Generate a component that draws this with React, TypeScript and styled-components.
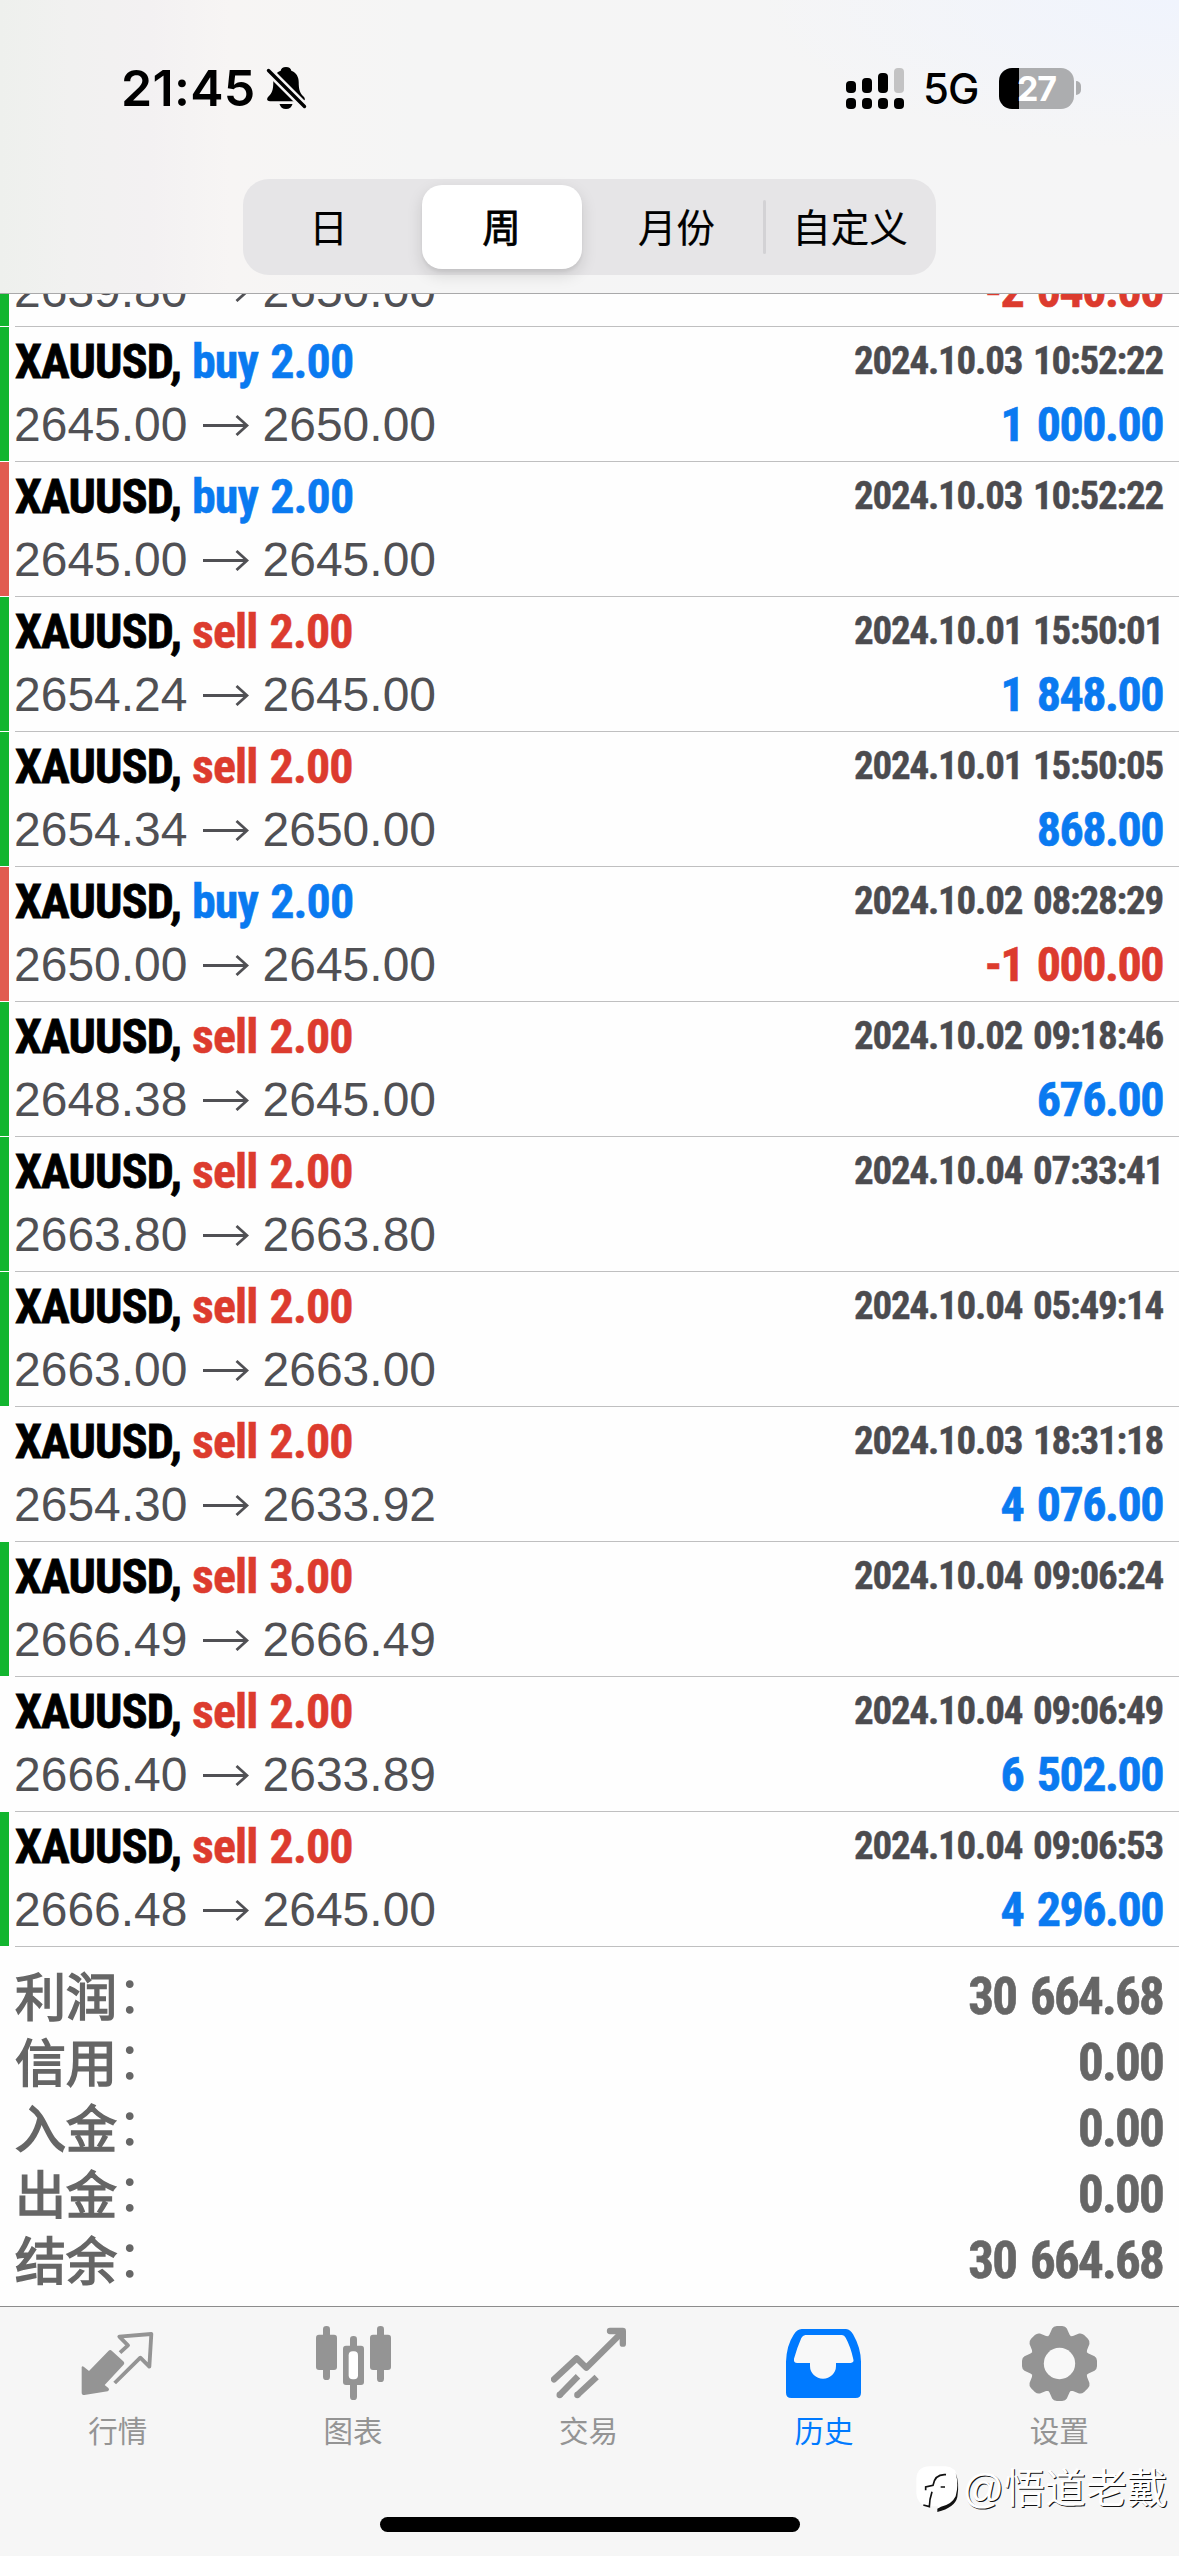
import React from 'react';
import styled, { createGlobalStyle } from 'styled-components';

const BLUE = '#0a7af0';
const RED = '#dc3b2e';
const GREEN = '#12b52f';
const CORAL = '#e15b50';
const GREY = '#949494';

const cjk = '"Liberation Sans", "Noto Sans CJK SC", sans-serif';
const condensed = '"Roboto Condensed", Roboto, "Liberation Sans", sans-serif';

const GlobalStyle = createGlobalStyle`
  * { box-sizing: border-box; }
  body { margin: 0; background: #fff; }
`;

const Screen = styled.div`
  position: relative;
  width: 1179px;
  height: 2556px;
  display: flex;
  flex-direction: column;
  background: #fefefe;
  overflow: hidden;
  font-family: ${cjk};
`;

/* ---------- header ---------- */

const Header = styled.header`
  height: 294px;
  flex: none;
  display: flex;
  flex-direction: column;
  align-items: center;
  border-bottom: 1px solid #a9a9aa;
  background:
    radial-gradient(ellipse 420px 150px at 100% 0, #f0f4fd, rgba(240, 244, 253, 0)),
    linear-gradient(90deg, #eef0ed 0, #f1f1f0 70px, #f3f1f2 150px, #f7f5f4 230px, #f5f5f5 420px, #f5f5f6 100%);
`;

const StatusBar = styled.div`
  width: 100%;
  height: 179px;
  padding: 54px 98px 0 121px;
  display: flex;
  justify-content: space-between;
  align-items: flex-start;
`;

const StatusGroup = styled.div`
  display: flex;
  align-items: center;
  height: 68px;
`;

const Clock = styled.span`
  font: 600 50px/68px Inter, sans-serif;
  letter-spacing: 0.3px;
  width: 145px;
  white-space: nowrap;
`;

const Network = styled.span`
  font: 500 42px/68px Inter, sans-serif;
  letter-spacing: -1px;
  width: 55px;
  margin: 2px 21px 0 19px;
  white-space: nowrap;
`;

const Battery = styled.div`
  width: 75px;
  height: 41px;
  border-radius: 13px;
  background: linear-gradient(90deg, #000 20px, #acadaf 20px);
  color: #fff;
  font: 700 34px/41px Inter, sans-serif;
  letter-spacing: -1px;
  text-align: center;
`;

const BatteryTip = styled.span`
  width: 5px;
  height: 14px;
  margin-left: 2px;
  border-radius: 0 5px 5px 0;
  background: #acadaf;
`;

const Segments = styled.div`
  width: 693px;
  height: 96px;
  margin-right: 1px;
  border-radius: 26px;
  background: #e6e5e7;
  display: grid;
  grid-template-columns: 172px 174px 176px 171px;
  padding: 6px 0;
`;

const Segment = styled.div<{ $active?: boolean; $divided?: boolean }>`
  position: relative;
  margin: 0 7px;
  padding-top: 3px;
  border-radius: 20px;
  text-align: center;
  font-size: 38.5px;
  font-weight: 400;
  -webkit-text-stroke: ${p => (p.$active ? '0.8px #000' : '0.2px #000')};
  line-height: 81px;
  white-space: nowrap;
  color: #000;
  background: ${p => (p.$active ? '#fff' : 'transparent')};
  box-shadow: ${p => (p.$active ? '0 6px 16px rgba(0,0,0,.13), 0 3px 3px rgba(0,0,0,.05)' : 'none')};
  &::after {
    content: '';
    display: ${p => (p.$divided ? 'block' : 'none')};
    position: absolute;
    right: -8px;
    top: 15px;
    width: 3px;
    height: 54px;
    border-radius: 2px;
    background: #d3d2d5;
  }
`;

/* ---------- deals ---------- */

const DealList = styled.main`
  flex: none;
  overflow: hidden;
`;

const Deal = styled.div<{ $bar?: string; $cut?: boolean }>`
  height: 135px;
  margin-top: ${p => (p.$cut ? '-102px' : 0)};
  display: flex;
  &::before {
    content: '';
    width: 9px;
    height: 134px;
    margin-right: 6px;
    background: ${p => p.$bar || 'transparent'};
  }
`;

const DealBody = styled.div<{ $cut?: boolean }>`
  flex: 1;
  display: grid;
  grid-template-columns: 1fr auto;
  grid-template-rows: 63px 64px;
  padding: ${p => (p.$cut ? 4 : 3)}px 16px 0 0;
  border-bottom: 1px solid #bfbfc0;
`;

const Title = styled.div`
  display: flex;
  font: 700 48px/64px ${condensed};
  white-space: pre;
`;

const Ticker = styled.span`
  width: 177px;
  letter-spacing: -0.8px;
  color: #000;
  -webkit-text-stroke: 0.8px #000;
`;

const Side = styled.span<{ $side: string }>`
  letter-spacing: -0.9px;
  word-spacing: 2px;
  color: ${p => (p.$side === 'buy' ? BLUE : RED)};
  -webkit-text-stroke: 0.5px ${p => (p.$side === 'buy' ? BLUE : RED)};
`;

const Time = styled.div`
  font: 700 39px/63px ${condensed};
  letter-spacing: -1.2px;
  word-spacing: 3px;
  text-align: right;
  color: #4b4b4f;
  -webkit-text-stroke: 0.4px #4b4b4f;
`;

const Prices = styled.div`
  grid-row: 2;
  display: flex;
  align-items: center;
  margin-left: -1px;
  font: 400 48px/64px "Liberation Sans", sans-serif;
  color: #505054;
  svg { margin: -2px 14px 0; }
`;

const Profit = styled.div<{ $loss?: boolean }>`
  grid-row: 2;
  grid-column: 2;
  font: 700 48px/64px ${condensed};
  letter-spacing: -1.5px;
  word-spacing: 4px;
  text-align: right;
  color: ${p => (p.$loss ? RED : BLUE)};
  -webkit-text-stroke: 0.6px ${p => (p.$loss ? RED : BLUE)};
`;

/* ---------- totals ---------- */

const Totals = styled.section`
  flex: 1;
  padding: 17px 16px 0 15px;
`;

const Total = styled.div`
  height: 66px;
  display: flex;
  justify-content: space-between;
  color: #666;
`;

const TotalName = styled.div`
  display: flex;
  margin-top: -3px;
  font: 400 51px/66px "Noto Sans CJK SC", sans-serif;
  -webkit-text-stroke: 1.7px #666;
`;

const Colon = styled.span`
  font-family: "Noto Sans CJK TC", sans-serif;
  font-feature-settings: "halt";
  -webkit-text-stroke: 0;
`;

const TotalValue = styled.span`
  font: 700 51px/66px ${condensed};
  letter-spacing: -1.8px;
  word-spacing: 4px;
  -webkit-text-stroke: 0.6px #666;
`;

/* ---------- tab bar ---------- */

const TabBar = styled.nav`
  flex: none;
  height: 250px;
  border-top: 1px solid #8c8c8c;
  background: #f6f6f6;
  display: flex;
  flex-direction: column;
  align-items: center;
`;

const Tabs = styled.div`
  width: 100%;
  height: 210px;
  padding: 19px 2px 0 0;
  display: grid;
  grid-template-columns: repeat(5, 1fr);
`;

const Tab = styled.div<{ $active?: boolean }>`
  display: flex;
  flex-direction: column;
  align-items: center;
  color: ${p => (p.$active ? '#007aff' : GREY)};
  svg { display: block; }
`;

const TabLabel = styled.span`
  margin-top: 11px;
  font-size: 29.5px;
  line-height: 40px;
`;

const HomeIndicator = styled.div`
  width: 420px;
  height: 15px;
  border-radius: 8px;
  background: #000;
`;

const Watermark = styled.div`
  position: absolute;
  right: 11px;
  bottom: 40px;
  display: flex;
  align-items: center;
  font-size: 41px;
  line-height: 54px;
  color: #fff;
  text-shadow: 1px 1px 0 #111;
  white-space: nowrap;
`;

/* ---------- drawings ---------- */

const BellOff = () => (
  <svg width="42" height="44" viewBox="0 0 42 44">
    <path d="M20 1c-3.200 0-5 1.700-5.300 3.800C9.800 6.500 7.300 11 7.300 16c0 8-1.300 11-4.800 14.500C.3 32.800.8 35.200 4 35.200h32c3.200 0 3.700-2.400 1.500-4.700C34 27 32.700 24 32.700 16c0-5-2.500-9.500-7.400-11.200C25 2.700 23.200 1 20 1z" fill="#000" />
    <path d="M13.500 38h13c-.8 3-3 5-6.500 5s-5.700-2-6.500-5z" fill="#000" />
    <path d="M2.500 4.500 L38.500 40.500" stroke="#f6f4f4" strokeWidth="8.500" />
    <path d="M2.500 4.500 L38.500 40.500" stroke="#000" strokeWidth="3.400" strokeLinecap="round" />
  </svg>
);

const Signal = () => (
  <svg width="58" height="41" viewBox="0 0 58 41">
    <rect x="0" y="13" width="10" height="12" rx="4" />
    <rect x="16" y="10" width="10" height="15" rx="4" />
    <rect x="32" y="5" width="10" height="20" rx="4" />
    <rect x="48" y="0" width="10" height="25" rx="4" fill="#c3c3c4" />
    {[0, 16, 32, 48].map(x => <rect key={x} x={x} y="30" width="10" height="11" rx="4" />)}
  </svg>
);

const Arrow = () => (
  <svg width="47" height="24" viewBox="0 0 47 24" fill="none" stroke="#505054" strokeWidth="2.800">
    <path d="M1 13.500H45M34.500 4L45 13.500L34.500 23" />
  </svg>
);

const QuotesIcon = () => (
  <svg width="75" height="75" viewBox="239 108 225 225">
    <path d="M325 182Q330 178 335 183L368 213Q375 219 369 225L313 285L324 294Q329 300 322 304L252 315Q244 315 244 308V231Q246 226 251 231L266 243Z" fill={GREY} />
    <path d="M359 188L383 166L357 140L453 132L447 230L420 203L343 279" fill="none" stroke={GREY} strokeWidth="11.500" strokeLinejoin="round" />
  </svg>
);

const ChartIcon = () => (
  <svg width="75" height="75" viewBox="945 108 225 225" fill={GREY}>
    <rect x="945" y="134" width="63" height="106" rx="9" />
    <rect x="966" y="108" width="21" height="162" rx="10" />
    <rect x="1107" y="134" width="63" height="106" rx="9" />
    <rect x="1128" y="108" width="21" height="168" rx="10" />
    <rect x="1047" y="138" width="21" height="192" rx="10" />
    <rect x="1026" y="167" width="63" height="118" rx="9" />
    <rect x="1043" y="184" width="28" height="84" rx="12" fill="#fff" />
  </svg>
);

const TradeIcon = () => (
  <svg width="75" height="75" viewBox="303 108 225 225" fill="none" stroke={GREY} strokeWidth="19" strokeLinejoin="round">
    <path d="M312 268L380 205L409 233L515 128" strokeLinecap="round" />
    <path d="M480 123H518.500V161" strokeLinecap="round" />
    <path d="M329 315L384 259M382 315L440 261" />
    <circle cx="329" cy="315" r="9.500" fill={GREY} stroke="none" />
    <circle cx="382" cy="315" r="9.500" fill={GREY} stroke="none" />
  </svg>
);

const HistoryIcon = () => (
  <svg width="75" height="75" viewBox="1008 108 225 225" fill="#007aff">
    <path d="M1055 117H1188Q1202 119 1210 134Q1232 172 1233 215V308Q1233 324 1217 324H1024Q1008 324 1008 308V215Q1010 165 1031 134Q1041 118 1055 117Z" />
    <path d="M1066 135Q1058 136 1054 144Q1040 176 1032 206Q1030 219 1042 219H1080V228A39 38 0 0 0 1158 228V219H1202Q1213 218 1210 208Q1202 170 1187 143Q1183 136 1176 135Z" fill="#f8f8f8" />
  </svg>
);

// Each of the eight teeth is the same profile turned by 45 degrees.
const tooth: [number, number][] = [[-34, -82], [-30, -87], [-22, -105], [-18, -112], [-8, -112.500], [8, -112.500], [18, -112], [22, -105], [30, -87], [34, -82]];
const gearPath = Array.from({ length: 8 }, (_, i) => {
  const a = (i * Math.PI) / 4;
  const p = tooth.map(([x, y]) => `${(x * Math.cos(a) - y * Math.sin(a)).toFixed(1)} ${(x * Math.sin(a) + y * Math.cos(a)).toFixed(1)}`);
  return `${i ? 'L' : 'M'}${p[0]}Q${p[1]} ${p[1]}L${p[2]}Q${p[3]} ${p[4]}L${p[5]}Q${p[6]} ${p[7]}L${p[8]}L${p[9]}`;
}).join('') + 'Z';

const GearIcon = () => (
  <svg width="75" height="75" viewBox="-112.500 -112.500 225 225">
    <path d={gearPath} fill={GREY} strokeLinejoin="round" />
    <circle r="47" fill="#f8f8f8" />
  </svg>
);

const WatermarkLogo = () => (
  <svg width="47" height="52" viewBox="104 530 141 156">
    <path d="M108 575Q112 540 148 540H196Q228 542 231 575V615Q226 655 176 672L172 660H145Q110 656 108 620Z" fill="#fff" />
    <path d="M226 560Q236 595 226 630Q214 655 182 661L171 667L171 677Q224 664 231 632Q238 590 226 560Z" fill="#111" />
    <path d="M197 565Q164 562 158 597L136 602V612M181 602H194" fill="none" stroke="#111" strokeWidth="5" />
    <path d="M155 616Q147 640 147 661L129 656" fill="none" stroke="#111" strokeWidth="5" />
  </svg>
);

/* ---------- data ---------- */

type Row = { bar?: string; side: 'buy' | 'sell'; lots: string; time: string; open: string; close: string; profit?: string };

const rows: Row[] = [
  { bar: GREEN, side: 'buy', lots: '2.00', time: '2024.10.03 10:52:22', open: '2645.00', close: '2650.00', profit: '1 000.00' },
  { bar: CORAL, side: 'buy', lots: '2.00', time: '2024.10.03 10:52:22', open: '2645.00', close: '2645.00' },
  { bar: GREEN, side: 'sell', lots: '2.00', time: '2024.10.01 15:50:01', open: '2654.24', close: '2645.00', profit: '1 848.00' },
  { bar: GREEN, side: 'sell', lots: '2.00', time: '2024.10.01 15:50:05', open: '2654.34', close: '2650.00', profit: '868.00' },
  { bar: CORAL, side: 'buy', lots: '2.00', time: '2024.10.02 08:28:29', open: '2650.00', close: '2645.00', profit: '-1 000.00' },
  { bar: GREEN, side: 'sell', lots: '2.00', time: '2024.10.02 09:18:46', open: '2648.38', close: '2645.00', profit: '676.00' },
  { bar: GREEN, side: 'sell', lots: '2.00', time: '2024.10.04 07:33:41', open: '2663.80', close: '2663.80' },
  { bar: GREEN, side: 'sell', lots: '2.00', time: '2024.10.04 05:49:14', open: '2663.00', close: '2663.00' },
  { side: 'sell', lots: '2.00', time: '2024.10.03 18:31:18', open: '2654.30', close: '2633.92', profit: '4 076.00' },
  { bar: GREEN, side: 'sell', lots: '3.00', time: '2024.10.04 09:06:24', open: '2666.49', close: '2666.49' },
  { side: 'sell', lots: '2.00', time: '2024.10.04 09:06:49', open: '2666.40', close: '2633.89', profit: '6 502.00' },
  { bar: GREEN, side: 'sell', lots: '2.00', time: '2024.10.04 09:06:53', open: '2666.48', close: '2645.00', profit: '4 296.00' },
];

const totals: [string, string][] = [
  ['利润', '30 664.68'],
  ['信用', '0.00'],
  ['入金', '0.00'],
  ['出金', '0.00'],
  ['结余', '30 664.68'],
];

const tabs = [
  { label: '行情', Icon: QuotesIcon },
  { label: '图表', Icon: ChartIcon },
  { label: '交易', Icon: TradeIcon },
  { label: '历史', Icon: HistoryIcon, active: true },
  { label: '设置', Icon: GearIcon },
];

export default function App() {
  return (
    <Screen>
      <GlobalStyle />
      <Header>
        <StatusBar>
          <StatusGroup>
            <Clock>21:45</Clock>
            <BellOff />
          </StatusGroup>
          <StatusGroup>
            <Signal />
            <Network>5G</Network>
            <Battery>27</Battery>
            <BatteryTip />
          </StatusGroup>
        </StatusBar>
        <Segments>
          <Segment>日</Segment>
          <Segment $active>周</Segment>
          <Segment $divided>月份</Segment>
          <Segment>自定义</Segment>
        </Segments>
      </Header>

      <DealList>
        <Deal $bar={GREEN} $cut>
          <DealBody $cut>
            <Prices>2639.80<Arrow />2650.00</Prices>
            <Profit $loss>-2 040.00</Profit>
          </DealBody>
        </Deal>
        {rows.map((r, i) => (
          <Deal key={i} $bar={r.bar}>
            <DealBody>
              <Title>
                <Ticker>XAUUSD,</Ticker>
                <Side $side={r.side}>{r.side} {r.lots}</Side>
              </Title>
              <Time>{r.time}</Time>
              <Prices>{r.open}<Arrow />{r.close}</Prices>
              {r.profit && <Profit $loss={r.profit.startsWith('-')}>{r.profit}</Profit>}
            </DealBody>
          </Deal>
        ))}
      </DealList>

      <Totals>
        {totals.map(([name, value]) => (
          <Total key={name}>
            <TotalName>{name}<Colon>：</Colon></TotalName>
            <TotalValue>{value}</TotalValue>
          </Total>
        ))}
      </Totals>

      <TabBar>
        <Tabs>
          {tabs.map(({ label, Icon, active }) => (
            <Tab key={label} $active={active}>
              <Icon />
              <TabLabel>{label}</TabLabel>
            </Tab>
          ))}
        </Tabs>
        <HomeIndicator />
      </TabBar>

      <Watermark>
        <WatermarkLogo />
        <span>@悟道老戴</span>
      </Watermark>
    </Screen>
  );
}
